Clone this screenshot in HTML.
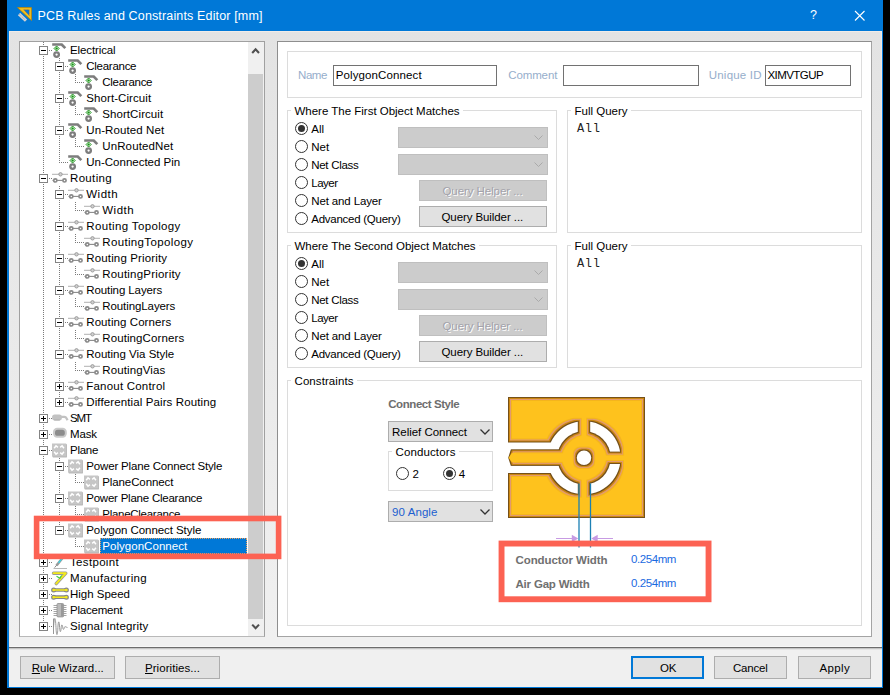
<!DOCTYPE html>
<html lang="en"><head><meta charset="utf-8"><title>PCB Rules and Constraints Editor [mm]</title>
<style>
html,body{margin:0;padding:0;background:#000;}
body{width:890px;height:695px;position:relative;overflow:hidden;font-family:"Liberation Sans", sans-serif;}
#win div{position:absolute;box-sizing:border-box;}
#win svg{position:absolute;left:0;top:0;}
.t{position:absolute;white-space:pre;line-height:16px;height:16px;}

</style></head>
<body><div id="win">
<div style="left:7px;top:0px;width:876px;height:688px;background:linear-gradient(#e3e3e3 31px,#f0f0f0 640px);border-left:2px solid #0078d7;border-right:1px solid #0078d7;border-bottom:1px solid #0078d7;"></div>
<div style="left:7px;top:0px;width:876px;height:31px;background:#0078d7;"></div>
<div style="left:9px;top:647px;width:873px;height:40px;background:#f0f0f0;border-top:1px solid #6c6c6c;"></div>
<div style="left:9px;top:648px;width:873px;height:1px;background:#c4c4c4;"></div>
<div style="left:9px;top:649px;width:873px;height:1px;background:#e4e4e4;"></div>
<div style="left:9px;top:646px;width:873px;height:1px;background:#f7f7f7;"></div>
<div style="left:9px;top:31px;width:873px;height:1px;background:#f0ece9;"></div>
<div style="left:9px;top:31px;width:1px;height:616px;background:#f1ebe7;"></div>
<div style="left:881px;top:31px;width:1px;height:616px;background:#f1ebe7;"></div>
<div style="left:19px;top:41px;width:246px;height:596px;background:#fff;border:1px solid #a0a0a0;border-bottom-color:#b9b9b9;"></div>
<div style="left:248px;top:42px;width:16px;height:594px;background:#f0f0f0;"></div>
<div style="left:248px;top:74px;width:15px;height:545px;background:#cdcdcd;"></div>
<div style="left:100px;top:538px;width:147px;height:16px;background:#0078d7;outline:1px dotted #e8a060;outline-offset:-1px;"></div>
<div style="left:277px;top:41px;width:595px;height:596px;background:#fff;border:1px solid #8e8e8e;border-right-color:#a4a4a4;border-bottom-color:#a4a4a4;"></div>
<div style="left:287px;top:51px;width:575px;height:47px;border:1px solid #dcdcdc;"></div>
<div style="left:333px;top:65px;width:164px;height:21px;background:#fff;border:1px solid #727272;"></div>
<div style="left:563px;top:65px;width:136px;height:21px;background:#fff;border:1px solid #727272;"></div>
<div style="left:765px;top:65px;width:86px;height:21px;background:#fff;border:1px solid #727272;"></div>
<div style="left:287px;top:110px;width:270px;height:123px;border:1px solid #dcdcdc;"></div>
<div style="left:291px;top:108px;width:172px;height:5px;background:#fff;"></div>
<div style="left:295.0px;top:122.0px;width:13px;height:13px;border:1px solid #333;border-radius:50%;background:#fff;"></div>
<div style="left:298.0px;top:125.0px;width:7px;height:7px;border-radius:50%;background:#333;"></div>
<div style="left:295.0px;top:140.0px;width:13px;height:13px;border:1px solid #333;border-radius:50%;background:#fff;"></div>
<div style="left:295.0px;top:158.0px;width:13px;height:13px;border:1px solid #333;border-radius:50%;background:#fff;"></div>
<div style="left:295.0px;top:176.0px;width:13px;height:13px;border:1px solid #333;border-radius:50%;background:#fff;"></div>
<div style="left:295.0px;top:194.0px;width:13px;height:13px;border:1px solid #333;border-radius:50%;background:#fff;"></div>
<div style="left:295.0px;top:212.0px;width:13px;height:13px;border:1px solid #333;border-radius:50%;background:#fff;"></div>
<div style="left:398px;top:127px;width:150px;height:21px;background:#ccc;border:1px solid #bfbfbf;"></div>
<div style="left:398px;top:154px;width:150px;height:21px;background:#ccc;border:1px solid #bfbfbf;"></div>
<div style="left:419px;top:180px;width:128px;height:21px;background:#ccc;border:1px solid #bfbfbf;"></div>
<div style="left:419px;top:206px;width:128px;height:21px;background:#e1e1e1;border:1px solid #adadad;"></div>
<div style="left:567px;top:110px;width:295px;height:123px;border:1px solid #dcdcdc;"></div>
<div style="left:571px;top:108px;width:60px;height:5px;background:#fff;"></div>
<div style="left:287px;top:245px;width:270px;height:123px;border:1px solid #dcdcdc;"></div>
<div style="left:291px;top:243px;width:188px;height:5px;background:#fff;"></div>
<div style="left:295.0px;top:257.0px;width:13px;height:13px;border:1px solid #333;border-radius:50%;background:#fff;"></div>
<div style="left:298.0px;top:260.0px;width:7px;height:7px;border-radius:50%;background:#333;"></div>
<div style="left:295.0px;top:275.0px;width:13px;height:13px;border:1px solid #333;border-radius:50%;background:#fff;"></div>
<div style="left:295.0px;top:293.0px;width:13px;height:13px;border:1px solid #333;border-radius:50%;background:#fff;"></div>
<div style="left:295.0px;top:311.0px;width:13px;height:13px;border:1px solid #333;border-radius:50%;background:#fff;"></div>
<div style="left:295.0px;top:329.0px;width:13px;height:13px;border:1px solid #333;border-radius:50%;background:#fff;"></div>
<div style="left:295.0px;top:347.0px;width:13px;height:13px;border:1px solid #333;border-radius:50%;background:#fff;"></div>
<div style="left:398px;top:262px;width:150px;height:21px;background:#ccc;border:1px solid #bfbfbf;"></div>
<div style="left:398px;top:289px;width:150px;height:21px;background:#ccc;border:1px solid #bfbfbf;"></div>
<div style="left:419px;top:315px;width:128px;height:21px;background:#ccc;border:1px solid #bfbfbf;"></div>
<div style="left:419px;top:341px;width:128px;height:21px;background:#e1e1e1;border:1px solid #adadad;"></div>
<div style="left:567px;top:245px;width:295px;height:123px;border:1px solid #dcdcdc;"></div>
<div style="left:571px;top:243px;width:60px;height:5px;background:#fff;"></div>
<div style="left:287px;top:380px;width:575px;height:246px;border:1px solid #dcdcdc;"></div>
<div style="left:291px;top:378px;width:66px;height:5px;background:#fff;"></div>
<div style="left:388px;top:421px;width:105px;height:21px;background:#e1e1e1;border:1px solid #adadad;"></div>
<div style="left:388px;top:451px;width:105px;height:40px;border:1px solid #dcdcdc;"></div>
<div style="left:392px;top:449px;width:67px;height:5px;background:#fff;"></div>
<div style="left:396.0px;top:467.0px;width:13px;height:13px;border:1px solid #333;border-radius:50%;background:#fff;"></div>
<div style="left:443.0px;top:467.0px;width:13px;height:13px;border:1px solid #333;border-radius:50%;background:#fff;"></div>
<div style="left:446.0px;top:470.0px;width:7px;height:7px;border-radius:50%;background:#333;"></div>
<div style="left:388px;top:501px;width:105px;height:21px;background:#e1e1e1;border:1px solid #adadad;"></div>
<div style="left:20px;top:656px;width:95px;height:23px;background:#e1e1e1;border:1px solid #adadad;"></div>
<div style="left:125px;top:656px;width:95px;height:23px;background:#e1e1e1;border:1px solid #adadad;"></div>
<div style="left:631px;top:656px;width:73px;height:23px;background:#e1e1e1;border:2px solid #0078d7;"></div>
<div style="left:714px;top:656px;width:73px;height:23px;background:#e1e1e1;border:1px solid #adadad;"></div>
<div style="left:798px;top:656px;width:73px;height:23px;background:#e1e1e1;border:1px solid #adadad;"></div>
<svg width="890" height="695" viewBox="0 0 890 695" shape-rendering="auto"><defs><style>.dot{fill:none;stroke:#7a7a7a;stroke-width:1;stroke-dasharray:1 1;shape-rendering:crispEdges}</style>
<symbol id="i-elec" viewBox="0 0 16 16" overflow="visible">
 <path d="M0.2 2.5H9.7L13.3 6.1" fill="none" stroke="#7d7d7d" stroke-width="2.7"/>
 <path d="M4.6 4L7.1 6.5L4.6 9L2.1 6.5Z" fill="#fff" stroke="#12920f" stroke-width="1"/>
 <path d="M4.6 5.3v2.4M3.4 6.5h2.4" stroke="#12920f" stroke-width="0.9"/>
 <circle cx="4.6" cy="12.6" r="2.3" fill="#fff" stroke="#7d7d7d" stroke-width="2.3"/>
</symbol>
<symbol id="i-rout" viewBox="0 0 16 16" overflow="visible">
 <path d="M0 4.3H16" stroke="#a8a8a8" stroke-width="0.9"/>
 <circle cx="8.5" cy="4.3" r="1.7" fill="#d0d0d0" stroke="#9c9c9c" stroke-width="1"/>
 <path d="M0.5 10.4H13" stroke="#8a8a8a" stroke-width="1.1"/>
 <circle cx="3.3" cy="10.4" r="1.6" fill="#fff" stroke="#8a8a8a" stroke-width="1.7"/>
 <circle cx="12.5" cy="10.4" r="1.6" fill="#fff" stroke="#8a8a8a" stroke-width="1.7"/>
</symbol>
<symbol id="i-smt" viewBox="0 0 16 16" overflow="visible">
 <path d="M8 6.8H12.4C14.3 6.8 14.7 8.4 15.5 10.2" fill="none" stroke="#c2c2c2" stroke-width="2.2"/>
 <rect x="0.1" y="4.4" width="9.8" height="6" rx="2.6" fill="#c2c2c2"/>
 <path d="M2.2 10H7.8" stroke="#adadad" stroke-width="0.9"/>
</symbol>
<symbol id="i-mask" viewBox="0 0 16 16" overflow="visible">
 <rect x="1" y="1.8" width="13.8" height="10" rx="4.2" fill="#cacaca"/>
 <rect x="3" y="3.8" width="9.8" height="6" rx="2.6" fill="#8c8c8c"/>
</symbol>
<symbol id="i-plane" viewBox="0 0 16 16" overflow="visible">
 <rect x="0.8" y="2.2" width="14" height="13.2" fill="#a8a8a8"/>
 <rect x="0" y="1.5" width="14.2" height="13.2" fill="#c6c6c6"/>
 <path d="M2.2 6.3L4 3.8L5.9 5.4M8.2 5.4L10.1 3.8L11.9 6.3M2.2 9.7L4 12.2L5.9 10.6M8.2 10.6L10.1 12.2L11.9 9.7" fill="none" stroke="#fff" stroke-width="1.5"/>
</symbol>
<symbol id="i-test" viewBox="0 0 16 16" overflow="visible">
 <path d="M1.5 14.5H15" stroke="#b8b8b8" stroke-width="1"/>
 <path d="M12.5 1.5L4.5 11.5" stroke="#9a9a9a" stroke-width="2.6"/>
 <path d="M11.5 2.6L6.5 8.9" stroke="#35d6e6" stroke-width="1.3"/>
 <path d="M4.8 11L2.6 13.6" stroke="#8a8a8a" stroke-width="1"/>
</symbol>
<symbol id="i-manu" viewBox="0 0 16 16" overflow="visible">
 <path d="M1.5 3.2H13.8L4.2 13.6" fill="none" stroke="#9a9a9a" stroke-width="3.4" stroke-linejoin="round" stroke-linecap="round"/>
 <path d="M1.5 3.2H13.8L4.2 13.6" fill="none" stroke="#f4ea1c" stroke-width="1.8" stroke-linejoin="round" stroke-linecap="round"/>
 <path d="M4.5 6.2L8 8.2L9.5 5.5" fill="none" stroke="#3cd23c" stroke-width="1.2"/>
</symbol>
<symbol id="i-high" viewBox="0 0 16 16" overflow="visible">
 <g fill="none" stroke-linecap="round">
 <path d="M2 4H14M2 11.2H14" stroke="#868686" stroke-width="3.7"/>
 <path d="M1.6 4h0.1M14.3 4h0.1M1.6 11.2h0.1M14.3 11.2h0.1" stroke="#868686" stroke-width="5"/>
 <path d="M2 4H14M2 11.2H14" stroke="#f4ea1c" stroke-width="1.5"/>
 <path d="M1.6 4h0.1M14.3 4h0.1M1.6 11.2h0.1M14.3 11.2h0.1" stroke="#f4ea1c" stroke-width="2.6"/>
 </g>
</symbol>
<symbol id="i-plac" viewBox="0 0 16 16" overflow="visible">
 <path d="M1.5 3.5h13M1.5 5.5h13M1.5 7.5h13M1.5 9.5h13M1.5 11.5h13M1.5 13.5h13" stroke="#9c9c9c" stroke-width="0.9"/>
 <rect x="5" y="1.5" width="6.6" height="13.4" rx="1" fill="#b9b9b9" stroke="#8f8f8f" stroke-width="0.8"/>
 <rect x="9" y="2" width="2.2" height="12.4" fill="#999"/>
</symbol>
<symbol id="i-sign" viewBox="0 0 16 16" overflow="visible">
 <path d="M1.5 0.5V16M1.5 9.5C2.2 -2 3.4 -3 4 9.5C4.5 19 5.4 19 5.9 9.5C6.3 2 7.2 2 7.6 9.5C8 15 8.8 15 9.2 9.5C9.5 6 10.3 6 10.7 9.5C11.1 12 11.9 12 12.3 9.5C12.9 8 13.5 9 15.5 9.5" fill="none" stroke="#8c8c8c" stroke-width="0.9"/>
</symbol>
</defs>
<g shape-rendering="crispEdges"><path class="dot" d="M49 50.5H52"/>
<rect x="39.5" y="46.5" width="8" height="8" fill="#fff" stroke="#848484"/>
<path d="M41 50.5h5" stroke="#000"/>
<path class="dot" d="M65 66.5H68"/>
<rect x="55.5" y="62.5" width="8" height="8" fill="#fff" stroke="#848484"/>
<path d="M57 66.5h5" stroke="#000"/>
<path class="dot" d="M75.5 74V82.5H84"/>
<path class="dot" d="M65 98.5H68"/>
<rect x="55.5" y="94.5" width="8" height="8" fill="#fff" stroke="#848484"/>
<path d="M57 98.5h5" stroke="#000"/>
<path class="dot" d="M75.5 106V114.5H84"/>
<path class="dot" d="M65 130.5H68"/>
<rect x="55.5" y="126.5" width="8" height="8" fill="#fff" stroke="#848484"/>
<path d="M57 130.5h5" stroke="#000"/>
<path class="dot" d="M75.5 138V146.5H84"/>
<path class="dot" d="M59.5 162V162.5H68"/>
<path class="dot" d="M49 178.5H52"/>
<rect x="39.5" y="174.5" width="8" height="8" fill="#fff" stroke="#848484"/>
<path d="M41 178.5h5" stroke="#000"/>
<path class="dot" d="M65 194.5H68"/>
<rect x="55.5" y="190.5" width="8" height="8" fill="#fff" stroke="#848484"/>
<path d="M57 194.5h5" stroke="#000"/>
<path class="dot" d="M75.5 202V210.5H84"/>
<path class="dot" d="M65 226.5H68"/>
<rect x="55.5" y="222.5" width="8" height="8" fill="#fff" stroke="#848484"/>
<path d="M57 226.5h5" stroke="#000"/>
<path class="dot" d="M75.5 234V242.5H84"/>
<path class="dot" d="M65 258.5H68"/>
<rect x="55.5" y="254.5" width="8" height="8" fill="#fff" stroke="#848484"/>
<path d="M57 258.5h5" stroke="#000"/>
<path class="dot" d="M75.5 266V274.5H84"/>
<path class="dot" d="M65 290.5H68"/>
<rect x="55.5" y="286.5" width="8" height="8" fill="#fff" stroke="#848484"/>
<path d="M57 290.5h5" stroke="#000"/>
<path class="dot" d="M75.5 298V306.5H84"/>
<path class="dot" d="M65 322.5H68"/>
<rect x="55.5" y="318.5" width="8" height="8" fill="#fff" stroke="#848484"/>
<path d="M57 322.5h5" stroke="#000"/>
<path class="dot" d="M75.5 330V338.5H84"/>
<path class="dot" d="M65 354.5H68"/>
<rect x="55.5" y="350.5" width="8" height="8" fill="#fff" stroke="#848484"/>
<path d="M57 354.5h5" stroke="#000"/>
<path class="dot" d="M75.5 362V370.5H84"/>
<path class="dot" d="M65 386.5H68"/>
<rect x="55.5" y="382.5" width="8" height="8" fill="#fff" stroke="#848484"/>
<path d="M57 386.5h5" stroke="#000"/>
<path d="M59.5 384v5" stroke="#000"/>
<path class="dot" d="M65 402.5H68"/>
<rect x="55.5" y="398.5" width="8" height="8" fill="#fff" stroke="#848484"/>
<path d="M57 402.5h5" stroke="#000"/>
<path d="M59.5 400v5" stroke="#000"/>
<path class="dot" d="M49 418.5H52"/>
<rect x="39.5" y="414.5" width="8" height="8" fill="#fff" stroke="#848484"/>
<path d="M41 418.5h5" stroke="#000"/>
<path d="M43.5 416v5" stroke="#000"/>
<path class="dot" d="M49 434.5H52"/>
<rect x="39.5" y="430.5" width="8" height="8" fill="#fff" stroke="#848484"/>
<path d="M41 434.5h5" stroke="#000"/>
<path d="M43.5 432v5" stroke="#000"/>
<path class="dot" d="M49 450.5H52"/>
<rect x="39.5" y="446.5" width="8" height="8" fill="#fff" stroke="#848484"/>
<path d="M41 450.5h5" stroke="#000"/>
<path class="dot" d="M65 466.5H68"/>
<rect x="55.5" y="462.5" width="8" height="8" fill="#fff" stroke="#848484"/>
<path d="M57 466.5h5" stroke="#000"/>
<path class="dot" d="M75.5 474V482.5H84"/>
<path class="dot" d="M65 498.5H68"/>
<rect x="55.5" y="494.5" width="8" height="8" fill="#fff" stroke="#848484"/>
<path d="M57 498.5h5" stroke="#000"/>
<path class="dot" d="M75.5 506V514.5H84"/>
<path class="dot" d="M65 530.5H68"/>
<rect x="55.5" y="526.5" width="8" height="8" fill="#fff" stroke="#848484"/>
<path d="M57 530.5h5" stroke="#000"/>
<path class="dot" d="M75.5 538V546.5H84"/>
<path class="dot" d="M49 562.5H52"/>
<rect x="39.5" y="558.5" width="8" height="8" fill="#fff" stroke="#848484"/>
<path d="M41 562.5h5" stroke="#000"/>
<path d="M43.5 560v5" stroke="#000"/>
<path class="dot" d="M49 578.5H52"/>
<rect x="39.5" y="574.5" width="8" height="8" fill="#fff" stroke="#848484"/>
<path d="M41 578.5h5" stroke="#000"/>
<path d="M43.5 576v5" stroke="#000"/>
<path class="dot" d="M49 594.5H52"/>
<rect x="39.5" y="590.5" width="8" height="8" fill="#fff" stroke="#848484"/>
<path d="M41 594.5h5" stroke="#000"/>
<path d="M43.5 592v5" stroke="#000"/>
<path class="dot" d="M49 610.5H52"/>
<rect x="39.5" y="606.5" width="8" height="8" fill="#fff" stroke="#848484"/>
<path d="M41 610.5h5" stroke="#000"/>
<path d="M43.5 608v5" stroke="#000"/>
<path class="dot" d="M49 626.5H52"/>
<rect x="39.5" y="622.5" width="8" height="8" fill="#fff" stroke="#848484"/>
<path d="M41 626.5h5" stroke="#000"/>
<path d="M43.5 624v5" stroke="#000"/>
<path class="dot" d="M43.5 42V46"/>
<path class="dot" d="M43.5 56V174"/>
<path class="dot" d="M43.5 184V414"/>
<path class="dot" d="M43.5 424V430"/>
<path class="dot" d="M43.5 440V446"/>
<path class="dot" d="M43.5 456V558"/>
<path class="dot" d="M43.5 568V574"/>
<path class="dot" d="M43.5 584V590"/>
<path class="dot" d="M43.5 600V606"/>
<path class="dot" d="M43.5 616V622"/>
<path class="dot" d="M59.5 58V62"/>
<path class="dot" d="M59.5 72V94"/>
<path class="dot" d="M59.5 104V126"/>
<path class="dot" d="M59.5 136V162"/>
<path class="dot" d="M59.5 186V190"/>
<path class="dot" d="M59.5 200V222"/>
<path class="dot" d="M59.5 232V254"/>
<path class="dot" d="M59.5 264V286"/>
<path class="dot" d="M59.5 296V318"/>
<path class="dot" d="M59.5 328V350"/>
<path class="dot" d="M59.5 360V382"/>
<path class="dot" d="M59.5 392V398"/>
<path class="dot" d="M59.5 458V462"/>
<path class="dot" d="M59.5 472V494"/>
<path class="dot" d="M59.5 504V526"/></g>
<use href="#i-elec" x="52" y="42" width="16" height="16"/>
<use href="#i-elec" x="68" y="58" width="16" height="16"/>
<use href="#i-elec" x="84" y="74" width="16" height="16"/>
<use href="#i-elec" x="68" y="90" width="16" height="16"/>
<use href="#i-elec" x="84" y="106" width="16" height="16"/>
<use href="#i-elec" x="68" y="122" width="16" height="16"/>
<use href="#i-elec" x="84" y="138" width="16" height="16"/>
<use href="#i-elec" x="68" y="154" width="16" height="16"/>
<use href="#i-rout" x="52" y="170" width="16" height="16"/>
<use href="#i-rout" x="68" y="186" width="16" height="16"/>
<use href="#i-rout" x="84" y="202" width="16" height="16"/>
<use href="#i-rout" x="68" y="218" width="16" height="16"/>
<use href="#i-rout" x="84" y="234" width="16" height="16"/>
<use href="#i-rout" x="68" y="250" width="16" height="16"/>
<use href="#i-rout" x="84" y="266" width="16" height="16"/>
<use href="#i-rout" x="68" y="282" width="16" height="16"/>
<use href="#i-rout" x="84" y="298" width="16" height="16"/>
<use href="#i-rout" x="68" y="314" width="16" height="16"/>
<use href="#i-rout" x="84" y="330" width="16" height="16"/>
<use href="#i-rout" x="68" y="346" width="16" height="16"/>
<use href="#i-rout" x="84" y="362" width="16" height="16"/>
<use href="#i-rout" x="68" y="378" width="16" height="16"/>
<use href="#i-rout" x="68" y="394" width="16" height="16"/>
<use href="#i-smt" x="52" y="410" width="16" height="16"/>
<use href="#i-mask" x="52" y="426" width="16" height="16"/>
<use href="#i-plane" x="52" y="442" width="16" height="16"/>
<use href="#i-plane" x="68" y="458" width="16" height="16"/>
<use href="#i-plane" x="84" y="474" width="16" height="16"/>
<use href="#i-plane" x="68" y="490" width="16" height="16"/>
<use href="#i-plane" x="84" y="506" width="16" height="16"/>
<use href="#i-plane" x="68" y="522" width="16" height="16"/>
<use href="#i-plane" x="84" y="538" width="16" height="16"/>
<use href="#i-test" x="52" y="554" width="16" height="16"/>
<use href="#i-manu" x="52" y="570" width="16" height="16"/>
<use href="#i-high" x="52" y="586" width="16" height="16"/>
<use href="#i-plac" x="52" y="602" width="16" height="16"/>
<use href="#i-sign" x="52" y="618" width="16" height="16"/>
<path d="M534.5 135.5l4 4l4-4M534.5 162.5l4 4l4-4" fill="none" stroke="#aaa"/>
<path d="M534.5 270.5l4 4l4-4M534.5 297.5l4 4l4-4" fill="none" stroke="#aaa"/>
<path d="M480.5 429.5l4.5 4.5l4.5-4.5M480.5 509.5l4.5 4.5l4.5-4.5" fill="none" stroke="#333" stroke-width="1.25"/>
<path d="M252.2 53l3.4-3.6l3.4 3.6" fill="none" stroke="#505050" stroke-width="2.1"/><path d="M252.2 624.6l3.4 3.6l3.4-3.6" fill="none" stroke="#505050" stroke-width="2.1"/><path d="M855 11l9.5 9.5m0-9.5l-9.5 9.5" stroke="#fff" stroke-width="1.1"/><path d="M17.6 7.6H31.4V20.4Z" fill="#f2c11e" stroke="#b8860b" stroke-width="0.9"/><path d="M23.8 9.8H29.2V15.4Z" fill="#0078d7" stroke="#b03a2e" stroke-width="0.6" stroke-dasharray="0.8 1"/><path d="M19 14l7 6.6" stroke="#d2d2d2" stroke-width="3.2"/><path d="M19.4 14.4l6.2 5.8" stroke="#8c8c8c" stroke-width="1" stroke-dasharray="0.6 1.2"/><defs><clipPath id="dclip"><rect x="508" y="397" width="137" height="121"/></clipPath><filter id="ol" x="-5%" y="-5%" width="110%" height="110%" color-interpolation-filters="sRGB"><feMorphology in="SourceAlpha" operator="dilate" radius="4" result="d4"/><feGaussianBlur in="d4" stdDeviation="0.6" result="d4b"/><feFlood flood-color="#f0b01c" flood-opacity="0.7"/><feComposite in2="d4b" operator="in" result="o4"/><feMorphology in="SourceAlpha" operator="dilate" radius="3" result="d3"/><feGaussianBlur in="d3" stdDeviation="0.45" result="d3b"/><feFlood flood-color="#e0977a" flood-opacity="0.9"/><feComposite in2="d3b" operator="in" result="o3"/><feMorphology in="SourceAlpha" operator="dilate" radius="2" result="d2"/><feGaussianBlur in="d2" stdDeviation="0.35" result="d2b"/><feFlood flood-color="#cc8710"/><feComposite in2="d2b" operator="in" result="o2"/><feMorphology in="SourceAlpha" operator="dilate" radius="1" result="d1"/><feGaussianBlur in="d1" stdDeviation="0.3" result="d1b"/><feFlood flood-color="#75501a"/><feComposite in2="d1b" operator="in" result="o1"/><feMerge><feMergeNode in="o4"/><feMergeNode in="o3"/><feMergeNode in="o2"/><feMergeNode in="o1"/><feMergeNode in="SourceGraphic"/></feMerge></filter><mask id="dmask" maskUnits="userSpaceOnUse" x="490" y="380" width="180" height="160"><rect x="490" y="380" width="180" height="160" fill="#fff"/><circle cx="584.0" cy="457.8" r="26.7" fill="#000"/><rect x="490" y="449.3" width="94.0" height="16.599999999999966" fill="#000"/><rect x="577.8" y="412.8" width="12.4" height="45" fill="#000"/><rect x="577.8" y="457.8" width="12.4" height="45" fill="#000"/><rect x="584.0" y="451.6" width="45" height="12.4" fill="#000"/><path d="M490 448.3H511.2L508.2 457.8L511.2 466.9H490Z" fill="#fff"/><circle cx="584.0" cy="457.8" r="7.25" fill="#fff"/></mask></defs>
<g clip-path="url(#dclip)"><rect x="508" y="397" width="137" height="121" fill="#fec21d"/><g filter="url(#ol)"><g mask="url(#dmask)" fill="#fff"><path fill-rule="evenodd" d="M492 382H662V534H492Z M508 397V518H645V397Z"/><path d="M500 442.6H550.71A36.6 36.6 0 1 1 550.71 473.0H500Z"/></g></g><path d="M508.6 457.8L511.8 452.90000000000003H516V462.29999999999995H511.8Z" fill="#fec21d"/></g>
<path d="M579 483.5V547.5M590.5 483.5V547.5" stroke="#1c80b4" stroke-width="1.3"/>
<path d="M556 538.5H574M613 538.5H595" stroke="#c79be3" stroke-width="1"/>
<path d="M578.3 538.5l-6.5-3.8v7.6zM591.2 538.5l6.5-3.8v7.6z" fill="#c79be3"/></svg>
<span class="t" style="left:37.6px;top:8.37px;font-size:12.5px;color:#fff;letter-spacing:0.148px;">PCB Rules and Constraints Editor [mm]</span>
<span class="t" style="left:810px;top:7.17px;font-size:12.5px;color:#fff;letter-spacing:-0.300px;">?</span>
<span class="t" style="left:70.0px;top:41.52px;font-size:11.5px;color:#000;letter-spacing:-0.116px;">Electrical</span>
<span class="t" style="left:86.25px;top:57.52px;font-size:11.5px;color:#000;letter-spacing:-0.269px;">Clearance</span>
<span class="t" style="left:102.25px;top:73.52px;font-size:11.5px;color:#000;letter-spacing:-0.269px;">Clearance</span>
<span class="t" style="left:86.25px;top:89.52px;font-size:11.5px;color:#000;letter-spacing:0.084px;">Short-Circuit</span>
<span class="t" style="left:102.25px;top:105.52px;font-size:11.5px;color:#000;letter-spacing:0.077px;">ShortCircuit</span>
<span class="t" style="left:86.25px;top:121.52px;font-size:11.5px;color:#000;letter-spacing:0.099px;">Un-Routed Net</span>
<span class="t" style="left:102.25px;top:137.52px;font-size:11.5px;color:#000;letter-spacing:0.119px;">UnRoutedNet</span>
<span class="t" style="left:86.25px;top:153.52px;font-size:11.5px;color:#000;">Un-Connected Pin</span>
<span class="t" style="left:70.0px;top:169.52px;font-size:11.5px;color:#000;letter-spacing:0.337px;">Routing</span>
<span class="t" style="left:86.25px;top:185.52px;font-size:11.5px;color:#000;letter-spacing:0.519px;">Width</span>
<span class="t" style="left:102.25px;top:201.52px;font-size:11.5px;color:#000;letter-spacing:0.519px;">Width</span>
<span class="t" style="left:86.25px;top:217.52px;font-size:11.5px;color:#000;letter-spacing:0.364px;">Routing Topology</span>
<span class="t" style="left:102.25px;top:233.52px;font-size:11.5px;color:#000;letter-spacing:0.355px;">RoutingTopology</span>
<span class="t" style="left:86.25px;top:249.52px;font-size:11.5px;color:#000;letter-spacing:0.148px;">Routing Priority</span>
<span class="t" style="left:102.25px;top:265.52px;font-size:11.5px;color:#000;letter-spacing:0.205px;">RoutingPriority</span>
<span class="t" style="left:86.25px;top:281.52px;font-size:11.5px;color:#000;letter-spacing:-0.097px;">Routing Layers</span>
<span class="t" style="left:102.25px;top:297.52px;font-size:11.5px;color:#000;letter-spacing:-0.089px;">RoutingLayers</span>
<span class="t" style="left:86.25px;top:313.52px;font-size:11.5px;color:#000;letter-spacing:0.084px;">Routing Corners</span>
<span class="t" style="left:102.25px;top:329.52px;font-size:11.5px;color:#000;letter-spacing:0.104px;">RoutingCorners</span>
<span class="t" style="left:86.25px;top:345.52px;font-size:11.5px;color:#000;">Routing Via Style</span>
<span class="t" style="left:102.25px;top:361.52px;font-size:11.5px;color:#000;letter-spacing:0.108px;">RoutingVias</span>
<span class="t" style="left:86.25px;top:377.52px;font-size:11.5px;color:#000;letter-spacing:0.209px;">Fanout Control</span>
<span class="t" style="left:86.25px;top:393.52px;font-size:11.5px;color:#000;letter-spacing:0.115px;">Differential Pairs Routing</span>
<span class="t" style="left:70.0px;top:409.52px;font-size:11.5px;color:#000;letter-spacing:-1.094px;">SMT</span>
<span class="t" style="left:70.0px;top:425.52px;font-size:11.5px;color:#000;letter-spacing:-0.121px;">Mask</span>
<span class="t" style="left:70.0px;top:441.52px;font-size:11.5px;color:#000;letter-spacing:-0.284px;">Plane</span>
<span class="t" style="left:86.25px;top:457.52px;font-size:11.5px;color:#000;letter-spacing:-0.160px;">Power Plane Connect Style</span>
<span class="t" style="left:102.25px;top:473.52px;font-size:11.5px;color:#000;letter-spacing:-0.104px;">PlaneConnect</span>
<span class="t" style="left:86.25px;top:489.52px;font-size:11.5px;color:#000;letter-spacing:-0.230px;">Power Plane Clearance</span>
<span class="t" style="left:102.25px;top:505.52px;font-size:11.5px;color:#000;letter-spacing:-0.275px;">PlaneClearance</span>
<span class="t" style="left:86.25px;top:521.52px;font-size:11.5px;color:#000;letter-spacing:-0.065px;">Polygon Connect Style</span>
<span class="t" style="left:102.25px;top:537.52px;font-size:11.5px;color:#fff;letter-spacing:0.042px;">PolygonConnect</span>
<span class="t" style="left:70.0px;top:553.52px;font-size:11.5px;color:#000;letter-spacing:0.330px;">Testpoint</span>
<span class="t" style="left:70.0px;top:569.52px;font-size:11.5px;color:#000;letter-spacing:0.317px;">Manufacturing</span>
<span class="t" style="left:70.0px;top:585.52px;font-size:11.5px;color:#000;letter-spacing:-0.011px;">High Speed</span>
<span class="t" style="left:70.0px;top:601.52px;font-size:11.5px;color:#000;letter-spacing:-0.205px;">Placement</span>
<span class="t" style="left:70.0px;top:617.52px;font-size:11.5px;color:#000;letter-spacing:0.151px;">Signal Integrity</span>
<span class="t" style="left:298px;top:66.77px;font-size:11.5px;color:#96aecb;letter-spacing:-0.422px;">Name</span>
<span class="t" style="left:508.25px;top:66.77px;font-size:11.5px;color:#96aecb;letter-spacing:-0.123px;">Comment</span>
<span class="t" style="left:708.75px;top:66.77px;font-size:11.5px;color:#96aecb;letter-spacing:0.207px;">Unique ID</span>
<span class="t" style="left:335.75px;top:66.77px;font-size:11.5px;color:#000;letter-spacing:0.114px;">PolygonConnect</span>
<span class="t" style="left:767.5px;top:66.77px;font-size:11.5px;color:#000;letter-spacing:-0.570px;">XIMVTGUP</span>
<span class="t" style="left:294.5px;top:102.52px;font-size:11.5px;color:#000;letter-spacing:-0.010px;">Where The First Object Matches</span>
<span class="t" style="left:311.25px;top:121.02px;font-size:11.5px;color:#000;letter-spacing:0.073px;">All</span>
<span class="t" style="left:311.25px;top:139.02px;font-size:11.5px;color:#000;letter-spacing:0.031px;">Net</span>
<span class="t" style="left:311.25px;top:157.02px;font-size:11.5px;color:#000;letter-spacing:-0.290px;">Net Class</span>
<span class="t" style="left:311.25px;top:175.02px;font-size:11.5px;color:#000;letter-spacing:-0.506px;">Layer</span>
<span class="t" style="left:311.25px;top:193.02px;font-size:11.5px;color:#000;letter-spacing:-0.135px;">Net and Layer</span>
<span class="t" style="left:311.25px;top:211.02px;font-size:11.5px;color:#000;letter-spacing:-0.255px;">Advanced (Query)</span>
<span class="t" style="left:442.5px;top:183.02px;font-size:11.5px;color:#a3a3ab;letter-spacing:-0.073px;text-shadow:1px 1px 0 #fff;">Query Helper ...</span>
<span class="t" style="left:441.5px;top:208.72px;font-size:11.5px;color:#000;letter-spacing:-0.088px;">Query Builder ...</span>
<span class="t" style="left:574.5px;top:102.52px;font-size:11.5px;color:#000;">Full Query</span>
<span class="t" style="left:577px;top:121.34px;font-size:12px;color:#222;font-family:'Liberation Mono', monospace;letter-spacing:0.630px;">All</span>
<span class="t" style="left:294.5px;top:237.52px;font-size:11.5px;color:#000;letter-spacing:-0.031px;">Where The Second Object Matches</span>
<span class="t" style="left:311.25px;top:256.02px;font-size:11.5px;color:#000;letter-spacing:0.073px;">All</span>
<span class="t" style="left:311.25px;top:274.02px;font-size:11.5px;color:#000;letter-spacing:0.031px;">Net</span>
<span class="t" style="left:311.25px;top:292.02px;font-size:11.5px;color:#000;letter-spacing:-0.290px;">Net Class</span>
<span class="t" style="left:311.25px;top:310.02px;font-size:11.5px;color:#000;letter-spacing:-0.506px;">Layer</span>
<span class="t" style="left:311.25px;top:328.02px;font-size:11.5px;color:#000;letter-spacing:-0.135px;">Net and Layer</span>
<span class="t" style="left:311.25px;top:346.02px;font-size:11.5px;color:#000;letter-spacing:-0.255px;">Advanced (Query)</span>
<span class="t" style="left:442.5px;top:318.02px;font-size:11.5px;color:#a3a3ab;letter-spacing:-0.073px;text-shadow:1px 1px 0 #fff;">Query Helper ...</span>
<span class="t" style="left:441.5px;top:343.72px;font-size:11.5px;color:#000;letter-spacing:-0.088px;">Query Builder ...</span>
<span class="t" style="left:574.5px;top:237.52px;font-size:11.5px;color:#000;">Full Query</span>
<span class="t" style="left:577px;top:256.34px;font-size:12px;color:#222;font-family:'Liberation Mono', monospace;letter-spacing:0.630px;">All</span>
<span class="t" style="left:294.5px;top:372.52px;font-size:11.5px;color:#000;letter-spacing:0.075px;">Constraints</span>
<span class="t" style="left:388.25px;top:396.02px;font-size:11.5px;color:#6e6e6e;font-weight:700;letter-spacing:-0.438px;">Connect Style</span>
<span class="t" style="left:392px;top:423.52px;font-size:11.5px;color:#000;letter-spacing:-0.031px;">Relief Connect</span>
<span class="t" style="left:395.5px;top:443.52px;font-size:11.5px;color:#000;letter-spacing:0.119px;">Conductors</span>
<span class="t" style="left:412.5px;top:466.02px;font-size:11.5px;color:#000;letter-spacing:-0.300px;">2</span>
<span class="t" style="left:458.75px;top:466.02px;font-size:11.5px;color:#000;letter-spacing:-0.300px;">4</span>
<span class="t" style="left:392px;top:503.52px;font-size:11.5px;color:#1c5fd0;letter-spacing:0.092px;">90 Angle</span>
<span class="t" style="left:515.5px;top:552.02px;font-size:11.5px;color:#707070;font-weight:700;letter-spacing:-0.077px;">Conductor Width</span>
<span class="t" style="left:515.5px;top:575.72px;font-size:11.5px;color:#707070;font-weight:700;letter-spacing:-0.197px;">Air Gap Width</span>
<span class="t" style="left:631px;top:550.52px;font-size:11.5px;color:#1a6adf;letter-spacing:-0.420px;">0.254mm</span>
<span class="t" style="left:631px;top:575.22px;font-size:11.5px;color:#1a6adf;letter-spacing:-0.420px;">0.254mm</span>
<span class="t" style="left:31.75px;top:660.02px;font-size:11.5px;color:#000;letter-spacing:-0.017px;"><u>R</u>ule Wizard...</span>
<span class="t" style="left:145px;top:660.02px;font-size:11.5px;color:#000;letter-spacing:0.052px;"><u>P</u>riorities...</span>
<span class="t" style="left:660px;top:659.72px;font-size:11.5px;color:#000;letter-spacing:-0.312px;">OK</span>
<span class="t" style="left:733px;top:659.72px;font-size:11.5px;color:#000;letter-spacing:-0.219px;">Cancel</span>
<span class="t" style="left:819.5px;top:659.72px;font-size:11.5px;color:#000;letter-spacing:0.384px;">Apply</span>
<svg width="890" height="695" viewBox="0 0 890 695" style="z-index:5"><g fill="none" stroke="#fc6253"><rect x="36.6" y="518.5" width="242" height="37.9" stroke-width="5.6"/><rect x="501.55" y="543.55" width="207" height="55.7" stroke-width="5.9"/></g></svg>
</div></body></html>
